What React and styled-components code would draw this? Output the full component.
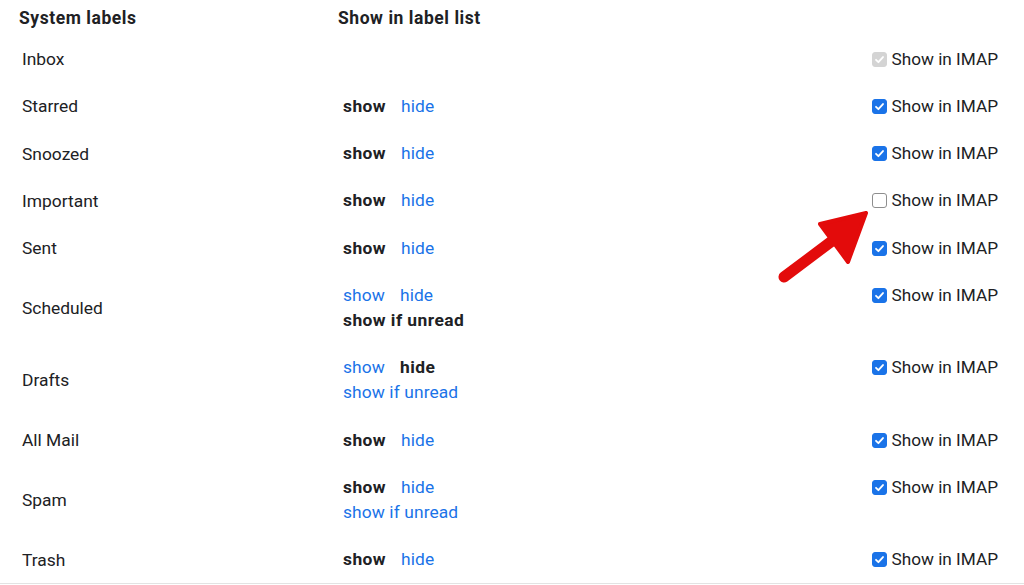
import React from 'react';
import styled, { createGlobalStyle } from 'styled-components';

const Global = createGlobalStyle`
  html,body{margin:0;padding:0;background:#fff;}
  body{font-family:Roboto,"Noto Sans",Arial,sans-serif;color:#202124;}
`;

const Page = styled.div`
  position:relative;width:1024px;height:585px;overflow:hidden;
`;
const Table = styled.div`
  display:grid;
  grid-template-columns:338px 1fr auto;
  border-bottom:1px solid #e3e3e3;
`;
const Head = styled.div`
  height:35px;display:flex;align-items:center;
  font-size:17.5px;font-weight:700;letter-spacing:.55px;
  padding-left:${p=>p.$pl||0}px;
`;
const Label = styled.div`
  display:flex;align-items:center;
  padding:1px 0 0 22px;font-size:17.4px;
`;
const Options = styled.div`
  padding:11.6px 0 10.7px 5px;
  font-size:17.4px;line-height:25px;
`;
const Line = styled.div`
  display:flex;gap:15px;
`;
const Opt = styled.span`
  color:${p=>p.$active?'#202124':'#1a73e8'};
  font-weight:${p=>p.$active?700:400};
  letter-spacing:${p=>p.$active?'.45px':'.1px'};
  cursor:${p=>p.$active?'default':'pointer'};
`;
const Imap = styled.label`
  display:flex;align-items:center;gap:5px;align-self:start;
  padding:11.6px 26px 10.7px 0;font-size:17.2px;line-height:25px;
`;
const Box = styled.span`
  width:15px;height:15px;box-sizing:border-box;border-radius:3px;
  display:inline-flex;align-items:center;justify-content:center;
  background:${p=>p.$disabled?'#d4d4d4':p.$checked?'#1a73e8':'#fff'};
  border:1px solid ${p=>p.$disabled?'#d4d4d4':p.$checked?'#1a73e8':'#8e8e8e'};
`;
const Arrow = styled.svg`
  position:absolute;left:770px;top:200px;pointer-events:none;
`;

const rows = [
  {name:'Inbox', opts:null, imap:'disabled'},
  {name:'Starred', opts:[['show','hide']], active:'show', imap:true},
  {name:'Snoozed', opts:[['show','hide']], active:'show', imap:true},
  {name:'Important', opts:[['show','hide']], active:'show', imap:false},
  {name:'Sent', opts:[['show','hide']], active:'show', imap:true},
  {name:'Scheduled', opts:[['show','hide'],['show if unread']], active:'show if unread', imap:true},
  {name:'Drafts', opts:[['show','hide'],['show if unread']], active:'hide', imap:true},
  {name:'All Mail', opts:[['show','hide']], active:'show', imap:true},
  {name:'Spam', opts:[['show','hide'],['show if unread']], active:'show', imap:true},
  {name:'Trash', opts:[['show','hide']], active:'show', imap:true},
];

function Checkbox({state}) {
  const disabled = state==='disabled';
  const checked = state===true || disabled;
  return (
    <Box $checked={checked} $disabled={disabled}>
      {checked && (
        <svg width="11" height="11" viewBox="0 0 12 12">
          <path d="M2.2 6.3l2.6 2.6 5-5.6" fill="none" stroke="#fff" strokeWidth="2" strokeLinecap="round" strokeLinejoin="round"/>
        </svg>
      )}
    </Box>
  );
}

export default function App() {
  return (
    <Page>
      <Global/>
      <Table>
        <Head $pl={19}>System labels</Head>
        <Head>Show in label list</Head>
        <Head/>
        {rows.map(r=>(
          <React.Fragment key={r.name}>
            <Label>{r.name}</Label>
            <Options>
              {r.opts ? r.opts.map((l,i)=>(
                <Line key={i}>
                  {l.map(o=><Opt key={o} $active={o===r.active}>{o}</Opt>)}
                </Line>
              )) : <Line>&nbsp;</Line>}
            </Options>
            <Imap>
              <Checkbox state={r.imap}/>
              Show in IMAP
            </Imap>
          </React.Fragment>
        ))}
      </Table>
      <Arrow width="110" height="90" viewBox="0 0 110 90">
        <line x1="14" y1="77" x2="70" y2="35" stroke="#e30b0b" strokeWidth="11" strokeLinecap="round"/>
        <polygon points="96,13 50,24 78,62" fill="#e30b0b" stroke="#e30b0b" strokeWidth="4" strokeLinejoin="round"/>
      </Arrow>
    </Page>
  );
}
